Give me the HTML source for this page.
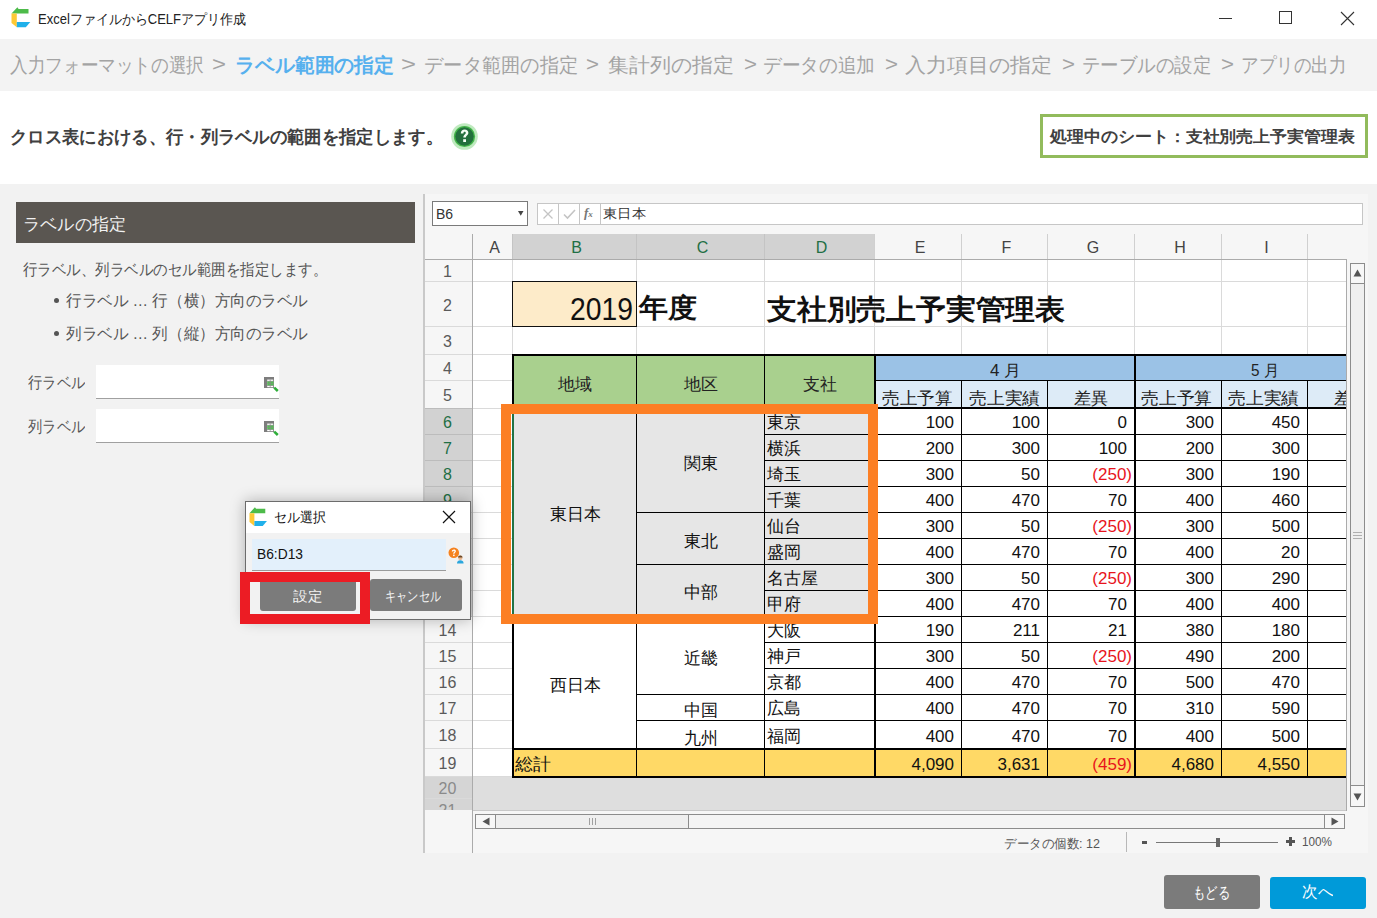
<!DOCTYPE html><html lang="ja"><head><meta charset="utf-8"><style>
html,body{margin:0;padding:0;}
body{width:1377px;height:918px;overflow:hidden;position:relative;background:#f2f2f2;font-family:"Liberation Sans",sans-serif;}
.a{position:absolute;}
.t{position:absolute;white-space:nowrap;}
.t span{display:inline-block;transform-origin:0 0;}
svg{position:absolute;}
</style></head><body>
<div class="a" style="left:0px;top:0px;width:1377px;height:39px;background:#ffffff;"></div>
<div class="a" style="left:0px;top:39px;width:1377px;height:52px;background:#f3f3f3;"></div>
<div class="a" style="left:0px;top:91px;width:1377px;height:93px;background:#ffffff;"></div>
<svg style="left:11px;top:7px" width="22" height="22" viewBox="0 0 22 22"><polygon points="0.50,6.60 6.40,0.20 7.60,1.90 17.50,1.90 17.50,6.60" fill="#4dbb4a"/><polygon points="0.50,6.60 5.80,6.60 5.80,20.30 0.50,16.00" fill="#fdc935"/><polygon points="5.80,15.00 19.30,15.00 14.80,20.30 5.80,20.30" fill="#20b0ea"/></svg>
<div class="t f" style="top:12px;font-size:14px;line-height:14px;color:#222;width:208px;left:38px;"><span style="transform:scaleX(0.9284)">ExcelファイルからCELFアプリ作成</span></div>
<div class="a" style="left:1219px;top:18px;width:13px;height:1px;background:#333;"></div>
<div class="a" style="left:1279px;top:11px;width:13px;height:13px;border:1px solid #333;box-sizing:border-box;"></div>
<svg style="left:1340px;top:11px" width="15" height="15" viewBox="0 0 15 15"><path d="M1 1L14 14M14 1L1 14" stroke="#333" stroke-width="1.1"/></svg>
<div class="t f" style="top:55px;font-size:20px;line-height:20px;color:#a3a3a3;width:194px;left:10px;"><span style="transform:scaleX(0.8818)">入力フォーマットの選択</span></div>
<div class="t f" style="top:54px;font-size:20px;line-height:20px;color:#a3a3a3;width:14px;left:212px;"><span style="transform:scaleX(1.1979)">&gt;</span></div>
<div class="t f" style="top:55px;font-size:20px;line-height:20px;color:#56b0ee;font-weight:bold;width:159px;left:235px;"><span style="transform:scaleX(0.9938)">ラベル範囲の指定</span></div>
<div class="t f" style="top:54px;font-size:20px;line-height:20px;color:#a3a3a3;width:15px;left:401px;"><span style="transform:scaleX(1.2834)">&gt;</span></div>
<div class="t f" style="top:55px;font-size:20px;line-height:20px;color:#a3a3a3;width:154px;left:424px;"><span style="transform:scaleX(0.9625)">データ範囲の指定</span></div>
<div class="t f" style="top:54px;font-size:20px;line-height:20px;color:#a3a3a3;width:13px;left:586px;"><span style="transform:scaleX(1.1123)">&gt;</span></div>
<div class="t f" style="top:55px;font-size:20px;line-height:20px;color:#a3a3a3;width:126px;left:608px;"><span style="transform:scaleX(1.0500)">集計列の指定</span></div>
<div class="t f" style="top:54px;font-size:20px;line-height:20px;color:#a3a3a3;width:13px;left:744px;"><span style="transform:scaleX(1.1123)">&gt;</span></div>
<div class="t f" style="top:55px;font-size:20px;line-height:20px;color:#a3a3a3;width:112px;left:763px;"><span style="transform:scaleX(0.9333)">データの追加</span></div>
<div class="t f" style="top:54px;font-size:20px;line-height:20px;color:#a3a3a3;width:13px;left:885px;"><span style="transform:scaleX(1.1123)">&gt;</span></div>
<div class="t f" style="top:55px;font-size:20px;line-height:20px;color:#a3a3a3;width:147px;left:905px;"><span style="transform:scaleX(1.0500)">入力項目の指定</span></div>
<div class="t f" style="top:54px;font-size:20px;line-height:20px;color:#a3a3a3;width:13px;left:1062px;"><span style="transform:scaleX(1.1123)">&gt;</span></div>
<div class="t f" style="top:55px;font-size:20px;line-height:20px;color:#a3a3a3;width:129px;left:1082px;"><span style="transform:scaleX(0.9214)">テーブルの設定</span></div>
<div class="t f" style="top:54px;font-size:20px;line-height:20px;color:#a3a3a3;width:13px;left:1221px;"><span style="transform:scaleX(1.1123)">&gt;</span></div>
<div class="t f" style="top:55px;font-size:20px;line-height:20px;color:#a3a3a3;width:105px;left:1241px;"><span style="transform:scaleX(0.8750)">アプリの出力</span></div>
<div class="t f" style="top:128px;font-size:18px;line-height:18px;color:#404040;font-weight:bold;width:433px;left:10px;"><span style="transform:scaleX(0.9622)">クロス表における、行・列ラベルの範囲を指定します。</span></div>
<svg style="left:450px;top:122px" width="29" height="29" viewBox="0 0 29 29"><circle cx="14.5" cy="14.5" r="13.3" fill="#bfeabf"/><circle cx="14.5" cy="14.5" r="10.6" fill="#43b549"/><circle cx="14.5" cy="14.5" r="9.2" fill="#22703c"/><path d="M10.8 11.6 C10.8 8.9 12.5 7.6 14.6 7.6 C16.9 7.6 18.4 9 18.4 11 C18.4 13.2 16 13.6 15.8 15.6 L13.3 15.6 C13.3 12.8 15.8 12.3 15.8 11 C15.8 10.2 15.3 9.8 14.6 9.8 C13.8 9.8 13.4 10.4 13.4 11.6 Z" fill="#f4fff4"/><rect x="13.2" y="17.2" width="2.8" height="2.8" fill="#f4fff4"/></svg>
<div class="a" style="left:1040px;top:114px;width:328px;height:44px;background:#ffffff;border:3.5px solid #92bb5c;box-sizing:border-box;"></div>
<div class="t f" style="top:129px;font-size:16px;line-height:16px;color:#404040;font-weight:bold;width:305px;left:1050px;"><span style="transform:scaleX(1.0590)">処理中のシート：支社別売上予実管理表</span></div>
<div class="a" style="left:16px;top:202px;width:399px;height:41px;background:#5a5651;"></div>
<div class="t f" style="top:216px;font-size:17px;line-height:17px;color:#f2f2f2;width:103px;left:23px;"><span style="transform:scaleX(1.0098)">ラベルの指定</span></div>
<div class="t f" style="top:262px;font-size:16px;line-height:16px;color:#555;width:304px;left:23px;"><span style="transform:scaleX(0.9048)">行ラベル、列ラベルのセル範囲を指定します。</span></div>
<div class="a" style="left:54px;top:298px;width:5px;height:5px;border-radius:50%;background:#555"></div>
<div class="t f" style="top:293px;font-size:16px;line-height:16px;color:#555;width:242px;left:66px;"><span style="transform:scaleX(0.9723)">行ラベル … 行（横）方向のラベル</span></div>
<div class="a" style="left:54px;top:331px;width:5px;height:5px;border-radius:50%;background:#555"></div>
<div class="t f" style="top:326px;font-size:16px;line-height:16px;color:#555;width:242px;left:66px;"><span style="transform:scaleX(0.9723)">列ラベル … 列（縦）方向のラベル</span></div>
<div class="t f" style="top:375px;font-size:16px;line-height:16px;color:#555;width:57px;left:28px;"><span style="transform:scaleX(0.8906)">行ラベル</span></div>
<div class="t f" style="top:419px;font-size:16px;line-height:16px;color:#555;width:57px;left:28px;"><span style="transform:scaleX(0.8906)">列ラベル</span></div>
<div class="a" style="left:96px;top:365px;width:183px;height:34px;background:#ffffff;border-bottom:1.5px solid #a0a0a0;box-sizing:border-box;"></div>
<svg style="left:264px;top:377px" width="15" height="15" viewBox="0 0 15 15"><rect x="0" y="0" width="10" height="11" fill="#7d7d7d"/><rect x="3.2" y="2.6" width="6" height="7.6" fill="#ffffff"/><rect x="3.2" y="4.2" width="6.4" height="4.4" fill="#4fc24f"/><path d="M6.2 2.6V10.2M3.2 4.3H9.6M3.2 6.4H9.6M3.2 8.5H9.6" stroke="#8a8a8a" stroke-width="0.7"/><path d="M10.2 10.6L13.8 14" stroke="#2fae3a" stroke-width="2.6"/></svg>
<div class="a" style="left:96px;top:409px;width:183px;height:34px;background:#ffffff;border-bottom:1.5px solid #a0a0a0;box-sizing:border-box;"></div>
<svg style="left:264px;top:421px" width="15" height="15" viewBox="0 0 15 15"><rect x="0" y="0" width="10" height="11" fill="#7d7d7d"/><rect x="3.2" y="2.6" width="6" height="7.6" fill="#ffffff"/><rect x="3.2" y="4.2" width="6.4" height="4.4" fill="#4fc24f"/><path d="M6.2 2.6V10.2M3.2 4.3H9.6M3.2 6.4H9.6M3.2 8.5H9.6" stroke="#8a8a8a" stroke-width="0.7"/><path d="M10.2 10.6L13.8 14" stroke="#2fae3a" stroke-width="2.6"/></svg>
<div class="a" style="left:423px;top:194px;width:945px;height:659px;background:#f6f6f6;"></div>
<div class="a" style="left:423px;top:194px;width:2px;height:659px;background:#c9c9c9;"></div>
<div class="a" style="left:432px;top:201px;width:96px;height:25px;background:#ffffff;border:1px solid #7a7a7a;box-sizing:border-box;"></div>
<div class="t" style="top:207px;font-size:14px;line-height:14px;color:#333;left:436px;"><span>B6</span></div>
<svg style="left:518px;top:211px" width="6" height="5" viewBox="0 0 6 5"><path d="M0 0H5.5L2.75 4.8Z" fill="#444"/></svg>
<div class="a" style="left:537px;top:203px;width:826px;height:22px;background:#ffffff;border:1px solid #c6c6c6;box-sizing:border-box;"></div>
<div class="a" style="left:558px;top:204px;width:1px;height:20px;background:#c6c6c6;"></div>
<div class="a" style="left:579px;top:204px;width:1px;height:20px;background:#c6c6c6;"></div>
<div class="a" style="left:600px;top:204px;width:1px;height:20px;background:#c6c6c6;"></div>
<svg style="left:542px;top:208px" width="12" height="12" viewBox="0 0 12 12"><path d="M1.5 1.5L10.5 10.5M10.5 1.5L1.5 10.5" stroke="#c4c4c4" stroke-width="1.3"/></svg>
<svg style="left:563px;top:208px" width="13" height="12" viewBox="0 0 13 12"><path d="M1 6.5L4.5 10L12 2" stroke="#c4c4c4" stroke-width="1.6" fill="none"/></svg>
<div class="t" style="left:584px;top:206px;font-size:13px;line-height:13px;font-style:italic;font-family:'Liberation Serif',serif;font-weight:bold;color:#777"><span>f<span style="font-size:9px">x</span></span></div>
<div class="t f" style="top:207px;font-size:13px;line-height:13px;color:#333;width:43px;left:603px;"><span style="transform:scaleX(1.1026)">東日本</span></div>
<div class="a" style="left:425px;top:234px;width:943px;height:25px;background:#f6f6f6;"></div>
<div class="a" style="left:512px;top:234px;width:362px;height:25px;background:#d2d2d2;"></div>
<div class="a" style="left:472px;top:234px;width:1px;height:25px;background:#d0d0d0;"></div>
<div class="a" style="left:512px;top:234px;width:1px;height:25px;background:#c4c4c4;"></div>
<div class="a" style="left:636px;top:234px;width:1px;height:25px;background:#c4c4c4;"></div>
<div class="a" style="left:764px;top:234px;width:1px;height:25px;background:#c4c4c4;"></div>
<div class="a" style="left:874px;top:234px;width:1px;height:25px;background:#d0d0d0;"></div>
<div class="a" style="left:961px;top:234px;width:1px;height:25px;background:#d0d0d0;"></div>
<div class="a" style="left:1047px;top:234px;width:1px;height:25px;background:#d0d0d0;"></div>
<div class="a" style="left:1134px;top:234px;width:1px;height:25px;background:#d0d0d0;"></div>
<div class="a" style="left:1221px;top:234px;width:1px;height:25px;background:#d0d0d0;"></div>
<div class="a" style="left:1307px;top:234px;width:1px;height:25px;background:#d0d0d0;"></div>
<div class="a" style="left:425px;top:259px;width:943px;height:1px;background:#ababab;"></div>
<div class="t" style="top:240px;font-size:16px;line-height:16px;color:#444;left:-5.5px;width:1000px;text-align:center;"><span>A</span></div>
<div class="t" style="top:240px;font-size:16px;line-height:16px;color:#1f6f45;left:76.5px;width:1000px;text-align:center;"><span>B</span></div>
<div class="t" style="top:240px;font-size:16px;line-height:16px;color:#1f6f45;left:202.5px;width:1000px;text-align:center;"><span>C</span></div>
<div class="t" style="top:240px;font-size:16px;line-height:16px;color:#1f6f45;left:321.5px;width:1000px;text-align:center;"><span>D</span></div>
<div class="t" style="top:240px;font-size:16px;line-height:16px;color:#444;left:420.0px;width:1000px;text-align:center;"><span>E</span></div>
<div class="t" style="top:240px;font-size:16px;line-height:16px;color:#444;left:506.5px;width:1000px;text-align:center;"><span>F</span></div>
<div class="t" style="top:240px;font-size:16px;line-height:16px;color:#444;left:593.0px;width:1000px;text-align:center;"><span>G</span></div>
<div class="t" style="top:240px;font-size:16px;line-height:16px;color:#444;left:680.0px;width:1000px;text-align:center;"><span>H</span></div>
<div class="t" style="top:240px;font-size:16px;line-height:16px;color:#444;left:766.5px;width:1000px;text-align:center;"><span>I</span></div>
<div class="a" style="left:425px;top:260px;width:47px;height:593px;background:#f6f6f6;"></div>
<div class="a" style="left:472px;top:234px;width:1px;height:619px;background:#ababab;"></div>
<div class="a" style="left:473px;top:260px;width:873px;height:550px;background:#ffffff;"></div>
<div class="a" style="left:473px;top:777px;width:873px;height:33px;background:#dedede;"></div>
<div class="a" style="left:425px;top:408px;width:47px;height:208px;background:#d2d2d2;"></div>
<div class="a" style="left:425px;top:776px;width:47px;height:34px;background:#d5d5d5;"></div>
<div class="a" style="left:512px;top:260px;width:1px;height:516px;background:#dadada;"></div>
<div class="a" style="left:636px;top:260px;width:1px;height:516px;background:#dadada;"></div>
<div class="a" style="left:764px;top:260px;width:1px;height:516px;background:#dadada;"></div>
<div class="a" style="left:874px;top:260px;width:1px;height:516px;background:#dadada;"></div>
<div class="a" style="left:961px;top:260px;width:1px;height:516px;background:#dadada;"></div>
<div class="a" style="left:1047px;top:260px;width:1px;height:516px;background:#dadada;"></div>
<div class="a" style="left:1134px;top:260px;width:1px;height:516px;background:#dadada;"></div>
<div class="a" style="left:1221px;top:260px;width:1px;height:516px;background:#dadada;"></div>
<div class="a" style="left:1307px;top:260px;width:1px;height:516px;background:#dadada;"></div>
<div class="a" style="left:1346px;top:260px;width:1px;height:516px;background:#dadada;"></div>
<div class="a" style="left:473px;top:281px;width:873px;height:1px;background:#dadada;"></div>
<div class="a" style="left:425px;top:281px;width:47px;height:1px;background:#dadada;"></div>
<div class="a" style="left:473px;top:326px;width:873px;height:1px;background:#dadada;"></div>
<div class="a" style="left:425px;top:326px;width:47px;height:1px;background:#dadada;"></div>
<div class="a" style="left:473px;top:354px;width:873px;height:1px;background:#dadada;"></div>
<div class="a" style="left:425px;top:354px;width:47px;height:1px;background:#dadada;"></div>
<div class="a" style="left:473px;top:380px;width:873px;height:1px;background:#dadada;"></div>
<div class="a" style="left:425px;top:380px;width:47px;height:1px;background:#dadada;"></div>
<div class="a" style="left:473px;top:408px;width:873px;height:1px;background:#dadada;"></div>
<div class="a" style="left:425px;top:408px;width:47px;height:1px;background:#bcbcbc;"></div>
<div class="a" style="left:473px;top:434px;width:873px;height:1px;background:#dadada;"></div>
<div class="a" style="left:425px;top:434px;width:47px;height:1px;background:#bcbcbc;"></div>
<div class="a" style="left:473px;top:460px;width:873px;height:1px;background:#dadada;"></div>
<div class="a" style="left:425px;top:460px;width:47px;height:1px;background:#bcbcbc;"></div>
<div class="a" style="left:473px;top:486px;width:873px;height:1px;background:#dadada;"></div>
<div class="a" style="left:425px;top:486px;width:47px;height:1px;background:#bcbcbc;"></div>
<div class="a" style="left:473px;top:512px;width:873px;height:1px;background:#dadada;"></div>
<div class="a" style="left:425px;top:512px;width:47px;height:1px;background:#bcbcbc;"></div>
<div class="a" style="left:473px;top:538px;width:873px;height:1px;background:#dadada;"></div>
<div class="a" style="left:425px;top:538px;width:47px;height:1px;background:#bcbcbc;"></div>
<div class="a" style="left:473px;top:564px;width:873px;height:1px;background:#dadada;"></div>
<div class="a" style="left:425px;top:564px;width:47px;height:1px;background:#bcbcbc;"></div>
<div class="a" style="left:473px;top:590px;width:873px;height:1px;background:#dadada;"></div>
<div class="a" style="left:425px;top:590px;width:47px;height:1px;background:#bcbcbc;"></div>
<div class="a" style="left:473px;top:616px;width:873px;height:1px;background:#dadada;"></div>
<div class="a" style="left:425px;top:616px;width:47px;height:1px;background:#bcbcbc;"></div>
<div class="a" style="left:473px;top:642px;width:873px;height:1px;background:#dadada;"></div>
<div class="a" style="left:425px;top:642px;width:47px;height:1px;background:#dadada;"></div>
<div class="a" style="left:473px;top:668px;width:873px;height:1px;background:#dadada;"></div>
<div class="a" style="left:425px;top:668px;width:47px;height:1px;background:#dadada;"></div>
<div class="a" style="left:473px;top:694px;width:873px;height:1px;background:#dadada;"></div>
<div class="a" style="left:425px;top:694px;width:47px;height:1px;background:#dadada;"></div>
<div class="a" style="left:473px;top:720px;width:873px;height:1px;background:#dadada;"></div>
<div class="a" style="left:425px;top:720px;width:47px;height:1px;background:#dadada;"></div>
<div class="a" style="left:473px;top:748px;width:873px;height:1px;background:#dadada;"></div>
<div class="a" style="left:425px;top:748px;width:47px;height:1px;background:#dadada;"></div>
<div class="a" style="left:473px;top:776px;width:873px;height:1px;background:#dadada;"></div>
<div class="a" style="left:425px;top:776px;width:47px;height:1px;background:#dadada;"></div>
<div class="a" style="left:473px;top:798px;width:873px;height:1px;background:#dadada;"></div>
<div class="a" style="left:425px;top:798px;width:47px;height:1px;background:#dadada;"></div>
<div class="t" style="top:264.0px;font-size:16px;line-height:16px;color:#5a5a5a;left:-52.5px;width:1000px;text-align:center;"><span>1</span></div>
<div class="t" style="top:297.5px;font-size:16px;line-height:16px;color:#5a5a5a;left:-52.5px;width:1000px;text-align:center;"><span>2</span></div>
<div class="t" style="top:334.0px;font-size:16px;line-height:16px;color:#5a5a5a;left:-52.5px;width:1000px;text-align:center;"><span>3</span></div>
<div class="t" style="top:361.0px;font-size:16px;line-height:16px;color:#5a5a5a;left:-52.5px;width:1000px;text-align:center;"><span>4</span></div>
<div class="t" style="top:388.0px;font-size:16px;line-height:16px;color:#5a5a5a;left:-52.5px;width:1000px;text-align:center;"><span>5</span></div>
<div class="t" style="top:415.0px;font-size:16px;line-height:16px;color:#1f6f45;left:-52.5px;width:1000px;text-align:center;"><span>6</span></div>
<div class="t" style="top:441.0px;font-size:16px;line-height:16px;color:#1f6f45;left:-52.5px;width:1000px;text-align:center;"><span>7</span></div>
<div class="t" style="top:467.0px;font-size:16px;line-height:16px;color:#1f6f45;left:-52.5px;width:1000px;text-align:center;"><span>8</span></div>
<div class="t" style="top:493.0px;font-size:16px;line-height:16px;color:#1f6f45;left:-52.5px;width:1000px;text-align:center;"><span>9</span></div>
<div class="t" style="top:519.0px;font-size:16px;line-height:16px;color:#1f6f45;left:-52.5px;width:1000px;text-align:center;"><span>10</span></div>
<div class="t" style="top:545.0px;font-size:16px;line-height:16px;color:#1f6f45;left:-52.5px;width:1000px;text-align:center;"><span>11</span></div>
<div class="t" style="top:571.0px;font-size:16px;line-height:16px;color:#1f6f45;left:-52.5px;width:1000px;text-align:center;"><span>12</span></div>
<div class="t" style="top:597.0px;font-size:16px;line-height:16px;color:#1f6f45;left:-52.5px;width:1000px;text-align:center;"><span>13</span></div>
<div class="t" style="top:623.0px;font-size:16px;line-height:16px;color:#5a5a5a;left:-52.5px;width:1000px;text-align:center;"><span>14</span></div>
<div class="t" style="top:649.0px;font-size:16px;line-height:16px;color:#5a5a5a;left:-52.5px;width:1000px;text-align:center;"><span>15</span></div>
<div class="t" style="top:675.0px;font-size:16px;line-height:16px;color:#5a5a5a;left:-52.5px;width:1000px;text-align:center;"><span>16</span></div>
<div class="t" style="top:701.0px;font-size:16px;line-height:16px;color:#5a5a5a;left:-52.5px;width:1000px;text-align:center;"><span>17</span></div>
<div class="t" style="top:728.0px;font-size:16px;line-height:16px;color:#5a5a5a;left:-52.5px;width:1000px;text-align:center;"><span>18</span></div>
<div class="t" style="top:756.0px;font-size:16px;line-height:16px;color:#5a5a5a;left:-52.5px;width:1000px;text-align:center;"><span>19</span></div>
<div class="t" style="top:781.0px;font-size:16px;line-height:16px;color:#8a8a8a;left:-52.5px;width:1000px;text-align:center;"><span>20</span></div>
<div class="t" style="top:803.0px;font-size:16px;line-height:16px;color:#8a8a8a;left:-52.5px;width:1000px;text-align:center;"><span>21</span></div>
<div class="a" style="left:425px;top:810px;width:47px;height:43px;background:#f6f6f6;"></div>
<div class="a" style="left:472px;top:810px;width:1px;height:43px;background:#ababab;"></div>
<div class="a" style="left:473px;top:777px;width:873px;height:33px;background:#dedede;"></div>
<div class="a" style="left:512px;top:281px;width:125px;height:46px;background:#fdebc9;border:1px solid #111;box-sizing:border-box;"></div>
<div class="t f" style="top:293px;font-size:32px;line-height:32px;color:#111;width:63px;left:570px;"><span style="transform:scaleX(0.8850)">2019</span></div>
<div class="t f" style="top:295px;font-size:27px;line-height:27px;color:#111;font-weight:bold;width:58px;left:639px;"><span style="transform:scaleX(1.0741)">年度</span></div>
<div class="t f" style="top:296px;font-size:28px;line-height:28px;color:#111;font-weight:bold;width:298px;left:767px;"><span style="transform:scaleX(1.0643)">支社別売上予実管理表</span></div>
<div class="a" style="left:512px;top:354px;width:362px;height:54px;background:#a9d08e;"></div>
<div class="a" style="left:874px;top:354px;width:472px;height:27px;background:#9bc2e6;"></div>
<div class="a" style="left:874px;top:381px;width:472px;height:27px;background:#ddebf7;"></div>
<div class="a" style="left:512px;top:748px;width:834px;height:29px;background:#ffd966;"></div>
<div class="a" style="left:512px;top:408px;width:362px;height:208px;background:#e6e6e6;"></div>
<div class="a" style="left:512px;top:616px;width:252px;height:132px;background:#ffffff;"></div>
<div class="a" style="left:636px;top:354px;width:1px;height:54px;background:#000;"></div>
<div class="a" style="left:764px;top:354px;width:1px;height:54px;background:#000;"></div>
<div class="a" style="left:961px;top:380px;width:1px;height:398px;background:#000;"></div>
<div class="a" style="left:1047px;top:380px;width:1px;height:398px;background:#000;"></div>
<div class="a" style="left:1221px;top:380px;width:1px;height:398px;background:#000;"></div>
<div class="a" style="left:1307px;top:380px;width:1px;height:398px;background:#000;"></div>
<div class="a" style="left:874px;top:380px;width:472px;height:1px;background:#000;"></div>
<div class="a" style="left:764px;top:434px;width:582px;height:1px;background:#000;"></div>
<div class="a" style="left:764px;top:460px;width:582px;height:1px;background:#000;"></div>
<div class="a" style="left:764px;top:486px;width:582px;height:1px;background:#000;"></div>
<div class="a" style="left:764px;top:512px;width:582px;height:1px;background:#000;"></div>
<div class="a" style="left:764px;top:538px;width:582px;height:1px;background:#000;"></div>
<div class="a" style="left:764px;top:564px;width:582px;height:1px;background:#000;"></div>
<div class="a" style="left:764px;top:590px;width:582px;height:1px;background:#000;"></div>
<div class="a" style="left:764px;top:616px;width:582px;height:1px;background:#000;"></div>
<div class="a" style="left:764px;top:642px;width:582px;height:1px;background:#000;"></div>
<div class="a" style="left:764px;top:668px;width:582px;height:1px;background:#000;"></div>
<div class="a" style="left:764px;top:694px;width:582px;height:1px;background:#000;"></div>
<div class="a" style="left:764px;top:720px;width:582px;height:1px;background:#000;"></div>
<div class="a" style="left:764px;top:748px;width:582px;height:1px;background:#000;"></div>
<div class="a" style="left:636px;top:512px;width:128px;height:1px;background:#000;"></div>
<div class="a" style="left:636px;top:564px;width:128px;height:1px;background:#000;"></div>
<div class="a" style="left:636px;top:694px;width:128px;height:1px;background:#000;"></div>
<div class="a" style="left:636px;top:720px;width:128px;height:1px;background:#000;"></div>
<div class="a" style="left:636px;top:408px;width:1px;height:370px;background:#000;"></div>
<div class="a" style="left:764px;top:408px;width:1px;height:370px;background:#000;"></div>
<div class="a" style="left:512px;top:616px;width:362px;height:1px;background:#000;"></div>
<div class="a" style="left:512px;top:354px;width:834px;height:2px;background:#000;"></div>
<div class="a" style="left:512px;top:407px;width:834px;height:2px;background:#000;"></div>
<div class="a" style="left:512px;top:748px;width:834px;height:2px;background:#000;"></div>
<div class="a" style="left:512px;top:776px;width:834px;height:2px;background:#000;"></div>
<div class="a" style="left:512px;top:354px;width:2px;height:424px;background:#000;"></div>
<div class="a" style="left:874px;top:354px;width:2px;height:424px;background:#000;"></div>
<div class="a" style="left:1134px;top:354px;width:2px;height:424px;background:#000;"></div>
<div class="a" style="left:512px;top:408px;width:2px;height:208px;background:#217346;"></div>
<div class="t" style="top:376px;font-size:17px;line-height:17px;color:#222;left:75px;width:1000px;text-align:center;"><span>地域</span></div>
<div class="t" style="top:376px;font-size:17px;line-height:17px;color:#222;left:201px;width:1000px;text-align:center;"><span>地区</span></div>
<div class="t" style="top:376px;font-size:17px;line-height:17px;color:#222;left:320px;width:1000px;text-align:center;"><span>支社</span></div>
<div class="t f" style="top:363px;font-size:16px;line-height:16px;color:#222;width:31px;left:990px;"><span style="transform:scaleX(1.0564)">4&nbsp;月</span></div>
<div class="t f" style="top:363px;font-size:16px;line-height:16px;color:#222;width:28px;left:1251px;"><span style="transform:scaleX(0.9542)">5&nbsp;月</span></div>
<div class="t f" style="top:390px;font-size:17px;line-height:17px;color:#222;width:70px;left:882px;"><span style="transform:scaleX(1.0294)">売上予算</span></div>
<div class="t f" style="top:390px;font-size:17px;line-height:17px;color:#222;width:71px;left:969px;"><span style="transform:scaleX(1.0441)">売上実績</span></div>
<div class="t f" style="top:390px;font-size:17px;line-height:17px;color:#222;width:34px;left:1074px;"><span style="transform:scaleX(1.0000)">差異</span></div>
<div class="t f" style="top:390px;font-size:17px;line-height:17px;color:#222;width:71px;left:1141px;"><span style="transform:scaleX(1.0441)">売上予算</span></div>
<div class="t f" style="top:390px;font-size:17px;line-height:17px;color:#222;width:71px;left:1228px;"><span style="transform:scaleX(1.0441)">売上実績</span></div>
<div class="t f" style="top:390px;font-size:17px;line-height:17px;color:#222;width:34px;left:1334px;"><span style="transform:scaleX(1.0000)">差異</span></div>
<div class="t" style="top:414px;font-size:17px;line-height:17px;color:#111;right:423px;text-align:right;"><span>100</span></div>
<div class="t" style="top:414px;font-size:17px;line-height:17px;color:#111;right:337px;text-align:right;"><span>100</span></div>
<div class="t" style="top:414px;font-size:17px;line-height:17px;color:#111;right:250px;text-align:right;"><span>0</span></div>
<div class="t" style="top:414px;font-size:17px;line-height:17px;color:#111;right:163px;text-align:right;"><span>300</span></div>
<div class="t" style="top:414px;font-size:17px;line-height:17px;color:#111;right:77px;text-align:right;"><span>450</span></div>
<div class="t" style="top:440px;font-size:17px;line-height:17px;color:#111;right:423px;text-align:right;"><span>200</span></div>
<div class="t" style="top:440px;font-size:17px;line-height:17px;color:#111;right:337px;text-align:right;"><span>300</span></div>
<div class="t" style="top:440px;font-size:17px;line-height:17px;color:#111;right:250px;text-align:right;"><span>100</span></div>
<div class="t" style="top:440px;font-size:17px;line-height:17px;color:#111;right:163px;text-align:right;"><span>200</span></div>
<div class="t" style="top:440px;font-size:17px;line-height:17px;color:#111;right:77px;text-align:right;"><span>300</span></div>
<div class="t" style="top:466px;font-size:17px;line-height:17px;color:#111;right:423px;text-align:right;"><span>300</span></div>
<div class="t" style="top:466px;font-size:17px;line-height:17px;color:#111;right:337px;text-align:right;"><span>50</span></div>
<div class="t" style="top:466px;font-size:17px;line-height:17px;color:#e8141c;right:245px;text-align:right;"><span>(250)</span></div>
<div class="t" style="top:466px;font-size:17px;line-height:17px;color:#111;right:163px;text-align:right;"><span>300</span></div>
<div class="t" style="top:466px;font-size:17px;line-height:17px;color:#111;right:77px;text-align:right;"><span>190</span></div>
<div class="t" style="top:492px;font-size:17px;line-height:17px;color:#111;right:423px;text-align:right;"><span>400</span></div>
<div class="t" style="top:492px;font-size:17px;line-height:17px;color:#111;right:337px;text-align:right;"><span>470</span></div>
<div class="t" style="top:492px;font-size:17px;line-height:17px;color:#111;right:250px;text-align:right;"><span>70</span></div>
<div class="t" style="top:492px;font-size:17px;line-height:17px;color:#111;right:163px;text-align:right;"><span>400</span></div>
<div class="t" style="top:492px;font-size:17px;line-height:17px;color:#111;right:77px;text-align:right;"><span>460</span></div>
<div class="t" style="top:518px;font-size:17px;line-height:17px;color:#111;right:423px;text-align:right;"><span>300</span></div>
<div class="t" style="top:518px;font-size:17px;line-height:17px;color:#111;right:337px;text-align:right;"><span>50</span></div>
<div class="t" style="top:518px;font-size:17px;line-height:17px;color:#e8141c;right:245px;text-align:right;"><span>(250)</span></div>
<div class="t" style="top:518px;font-size:17px;line-height:17px;color:#111;right:163px;text-align:right;"><span>300</span></div>
<div class="t" style="top:518px;font-size:17px;line-height:17px;color:#111;right:77px;text-align:right;"><span>500</span></div>
<div class="t" style="top:544px;font-size:17px;line-height:17px;color:#111;right:423px;text-align:right;"><span>400</span></div>
<div class="t" style="top:544px;font-size:17px;line-height:17px;color:#111;right:337px;text-align:right;"><span>470</span></div>
<div class="t" style="top:544px;font-size:17px;line-height:17px;color:#111;right:250px;text-align:right;"><span>70</span></div>
<div class="t" style="top:544px;font-size:17px;line-height:17px;color:#111;right:163px;text-align:right;"><span>400</span></div>
<div class="t" style="top:544px;font-size:17px;line-height:17px;color:#111;right:77px;text-align:right;"><span>20</span></div>
<div class="t" style="top:570px;font-size:17px;line-height:17px;color:#111;right:423px;text-align:right;"><span>300</span></div>
<div class="t" style="top:570px;font-size:17px;line-height:17px;color:#111;right:337px;text-align:right;"><span>50</span></div>
<div class="t" style="top:570px;font-size:17px;line-height:17px;color:#e8141c;right:245px;text-align:right;"><span>(250)</span></div>
<div class="t" style="top:570px;font-size:17px;line-height:17px;color:#111;right:163px;text-align:right;"><span>300</span></div>
<div class="t" style="top:570px;font-size:17px;line-height:17px;color:#111;right:77px;text-align:right;"><span>290</span></div>
<div class="t" style="top:596px;font-size:17px;line-height:17px;color:#111;right:423px;text-align:right;"><span>400</span></div>
<div class="t" style="top:596px;font-size:17px;line-height:17px;color:#111;right:337px;text-align:right;"><span>470</span></div>
<div class="t" style="top:596px;font-size:17px;line-height:17px;color:#111;right:250px;text-align:right;"><span>70</span></div>
<div class="t" style="top:596px;font-size:17px;line-height:17px;color:#111;right:163px;text-align:right;"><span>400</span></div>
<div class="t" style="top:596px;font-size:17px;line-height:17px;color:#111;right:77px;text-align:right;"><span>400</span></div>
<div class="t" style="top:622px;font-size:17px;line-height:17px;color:#111;right:423px;text-align:right;"><span>190</span></div>
<div class="t" style="top:622px;font-size:17px;line-height:17px;color:#111;right:337px;text-align:right;"><span>211</span></div>
<div class="t" style="top:622px;font-size:17px;line-height:17px;color:#111;right:250px;text-align:right;"><span>21</span></div>
<div class="t" style="top:622px;font-size:17px;line-height:17px;color:#111;right:163px;text-align:right;"><span>380</span></div>
<div class="t" style="top:622px;font-size:17px;line-height:17px;color:#111;right:77px;text-align:right;"><span>180</span></div>
<div class="t" style="top:648px;font-size:17px;line-height:17px;color:#111;right:423px;text-align:right;"><span>300</span></div>
<div class="t" style="top:648px;font-size:17px;line-height:17px;color:#111;right:337px;text-align:right;"><span>50</span></div>
<div class="t" style="top:648px;font-size:17px;line-height:17px;color:#e8141c;right:245px;text-align:right;"><span>(250)</span></div>
<div class="t" style="top:648px;font-size:17px;line-height:17px;color:#111;right:163px;text-align:right;"><span>490</span></div>
<div class="t" style="top:648px;font-size:17px;line-height:17px;color:#111;right:77px;text-align:right;"><span>200</span></div>
<div class="t" style="top:674px;font-size:17px;line-height:17px;color:#111;right:423px;text-align:right;"><span>400</span></div>
<div class="t" style="top:674px;font-size:17px;line-height:17px;color:#111;right:337px;text-align:right;"><span>470</span></div>
<div class="t" style="top:674px;font-size:17px;line-height:17px;color:#111;right:250px;text-align:right;"><span>70</span></div>
<div class="t" style="top:674px;font-size:17px;line-height:17px;color:#111;right:163px;text-align:right;"><span>500</span></div>
<div class="t" style="top:674px;font-size:17px;line-height:17px;color:#111;right:77px;text-align:right;"><span>470</span></div>
<div class="t" style="top:700px;font-size:17px;line-height:17px;color:#111;right:423px;text-align:right;"><span>400</span></div>
<div class="t" style="top:700px;font-size:17px;line-height:17px;color:#111;right:337px;text-align:right;"><span>470</span></div>
<div class="t" style="top:700px;font-size:17px;line-height:17px;color:#111;right:250px;text-align:right;"><span>70</span></div>
<div class="t" style="top:700px;font-size:17px;line-height:17px;color:#111;right:163px;text-align:right;"><span>310</span></div>
<div class="t" style="top:700px;font-size:17px;line-height:17px;color:#111;right:77px;text-align:right;"><span>590</span></div>
<div class="t" style="top:728px;font-size:17px;line-height:17px;color:#111;right:423px;text-align:right;"><span>400</span></div>
<div class="t" style="top:728px;font-size:17px;line-height:17px;color:#111;right:337px;text-align:right;"><span>470</span></div>
<div class="t" style="top:728px;font-size:17px;line-height:17px;color:#111;right:250px;text-align:right;"><span>70</span></div>
<div class="t" style="top:728px;font-size:17px;line-height:17px;color:#111;right:163px;text-align:right;"><span>400</span></div>
<div class="t" style="top:728px;font-size:17px;line-height:17px;color:#111;right:77px;text-align:right;"><span>500</span></div>
<div class="t" style="top:756px;font-size:17px;line-height:17px;color:#111;right:423px;text-align:right;"><span>4,090</span></div>
<div class="t" style="top:756px;font-size:17px;line-height:17px;color:#111;right:337px;text-align:right;"><span>3,631</span></div>
<div class="t" style="top:756px;font-size:17px;line-height:17px;color:#e8141c;right:245px;text-align:right;"><span>(459)</span></div>
<div class="t" style="top:756px;font-size:17px;line-height:17px;color:#111;right:163px;text-align:right;"><span>4,680</span></div>
<div class="t" style="top:756px;font-size:17px;line-height:17px;color:#111;right:77px;text-align:right;"><span>4,550</span></div>
<div class="t" style="top:414px;font-size:17px;line-height:17px;color:#111;left:767px;"><span>東京</span></div>
<div class="t" style="top:440px;font-size:17px;line-height:17px;color:#111;left:767px;"><span>横浜</span></div>
<div class="t" style="top:466px;font-size:17px;line-height:17px;color:#111;left:767px;"><span>埼玉</span></div>
<div class="t" style="top:492px;font-size:17px;line-height:17px;color:#111;left:767px;"><span>千葉</span></div>
<div class="t" style="top:518px;font-size:17px;line-height:17px;color:#111;left:767px;"><span>仙台</span></div>
<div class="t" style="top:544px;font-size:17px;line-height:17px;color:#111;left:767px;"><span>盛岡</span></div>
<div class="t" style="top:570px;font-size:17px;line-height:17px;color:#111;left:767px;"><span>名古屋</span></div>
<div class="t" style="top:596px;font-size:17px;line-height:17px;color:#111;left:767px;"><span>甲府</span></div>
<div class="t" style="top:622px;font-size:17px;line-height:17px;color:#111;left:767px;"><span>大阪</span></div>
<div class="t" style="top:648px;font-size:17px;line-height:17px;color:#111;left:767px;"><span>神戸</span></div>
<div class="t" style="top:674px;font-size:17px;line-height:17px;color:#111;left:767px;"><span>京都</span></div>
<div class="t" style="top:700px;font-size:17px;line-height:17px;color:#111;left:767px;"><span>広島</span></div>
<div class="t" style="top:728px;font-size:17px;line-height:17px;color:#111;left:767px;"><span>福岡</span></div>
<div class="t" style="top:455px;font-size:17px;line-height:17px;color:#111;left:201px;width:1000px;text-align:center;"><span>関東</span></div>
<div class="t" style="top:533px;font-size:17px;line-height:17px;color:#111;left:201px;width:1000px;text-align:center;"><span>東北</span></div>
<div class="t" style="top:584px;font-size:17px;line-height:17px;color:#111;left:201px;width:1000px;text-align:center;"><span>中部</span></div>
<div class="t" style="top:650px;font-size:17px;line-height:17px;color:#111;left:201px;width:1000px;text-align:center;"><span>近畿</span></div>
<div class="t" style="top:702px;font-size:17px;line-height:17px;color:#111;left:201px;width:1000px;text-align:center;"><span>中国</span></div>
<div class="t" style="top:730px;font-size:17px;line-height:17px;color:#111;left:201px;width:1000px;text-align:center;"><span>九州</span></div>
<div class="t" style="top:506px;font-size:17px;line-height:17px;color:#111;left:75px;width:1000px;text-align:center;"><span>東日本</span></div>
<div class="t" style="top:677px;font-size:17px;line-height:17px;color:#111;left:75px;width:1000px;text-align:center;"><span>西日本</span></div>
<div class="t f" style="top:756px;font-size:17px;line-height:17px;color:#111;width:36px;left:515px;"><span style="transform:scaleX(1.0588)">総計</span></div>
<div class="a" style="left:1347px;top:259px;width:21px;height:594px;background:#f6f6f6;"></div>
<div class="a" style="left:1346px;top:259px;width:1px;height:552px;background:#ababab;"></div>
<div class="a" style="left:1350px;top:263px;width:15px;height:544px;background:#efefef;border:1px solid #8c8c8c;box-sizing:border-box;"></div>
<div class="a" style="left:1350px;top:263px;width:15px;height:21px;background:#f7f7f7;border:1px solid #8c8c8c;box-sizing:border-box;"></div>
<div class="a" style="left:1350px;top:785px;width:15px;height:22px;background:#f7f7f7;border:1px solid #8c8c8c;box-sizing:border-box;"></div>
<svg style="left:1353px;top:269px" width="9" height="8" viewBox="0 0 9 8"><path d="M4.5 0.5L8.5 7.5H0.5Z" fill="#555"/></svg>
<svg style="left:1353px;top:793px" width="9" height="8" viewBox="0 0 9 8"><path d="M0.5 0.5H8.5L4.5 7.5Z" fill="#555"/></svg>
<div class="a" style="left:1353px;top:532px;width:9px;height:1px;background:#b0b0b0;"></div>
<div class="a" style="left:1353px;top:535px;width:9px;height:1px;background:#b0b0b0;"></div>
<div class="a" style="left:1353px;top:538px;width:9px;height:1px;background:#b0b0b0;"></div>
<div class="a" style="left:473px;top:810px;width:873px;height:1px;background:#c8c8c8;"></div>
<div class="a" style="left:475px;top:814px;width:870px;height:15px;background:#f4f4f4;border:1px solid #8c8c8c;box-sizing:border-box;"></div>
<div class="a" style="left:475px;top:814px;width:21px;height:15px;background:#f7f7f7;border:1px solid #8c8c8c;box-sizing:border-box;"></div>
<div class="a" style="left:495px;top:814px;width:194px;height:15px;background:#efefef;border:1px solid #8c8c8c;box-sizing:border-box;"></div>
<div class="a" style="left:1324px;top:814px;width:21px;height:15px;background:#f7f7f7;border:1px solid #8c8c8c;box-sizing:border-box;"></div>
<svg style="left:482px;top:817px" width="8" height="9" viewBox="0 0 8 9"><path d="M0.5 4.5L7.5 0.5V8.5Z" fill="#555"/></svg>
<svg style="left:1331px;top:817px" width="8" height="9" viewBox="0 0 8 9"><path d="M7.5 4.5L0.5 0.5V8.5Z" fill="#555"/></svg>
<div class="a" style="left:589px;top:818px;width:1px;height:7px;background:#a0a0a0;"></div>
<div class="a" style="left:592px;top:818px;width:1px;height:7px;background:#a0a0a0;"></div>
<div class="a" style="left:595px;top:818px;width:1px;height:7px;background:#a0a0a0;"></div>
<div class="t f" style="top:837px;font-size:13px;line-height:13px;color:#555;width:96px;left:1004px;"><span style="transform:scaleX(0.9630)">データの個数:&nbsp;12</span></div>
<div class="a" style="left:1126px;top:832px;width:1px;height:20px;background:#b8b8b8;"></div>
<div class="a" style="left:1142px;top:841px;width:5px;height:3px;background:#555;"></div>
<div class="a" style="left:1156px;top:842px;width:122px;height:1px;background:#777;"></div>
<div class="a" style="left:1216px;top:838px;width:4px;height:9px;background:#666;"></div>
<div class="a" style="left:1286px;top:840px;width:9px;height:3px;background:#555;"></div>
<div class="a" style="left:1289px;top:837px;width:3px;height:9px;background:#555;"></div>
<div class="t f" style="top:835px;font-size:13px;line-height:13px;color:#555;width:30px;left:1302px;"><span style="transform:scaleX(0.9023)">100%</span></div>
<div class="a" style="left:501px;top:404px;width:377px;height:220px;border:10px solid #fc7f24;box-sizing:border-box;"></div>
<div class="a" style="left:245px;top:501px;width:226px;height:119px;background:#f2f2f2;border:1px solid #6c6c6c;box-sizing:border-box;box-shadow:0 0 14px rgba(0,0,0,0.28);"></div>
<div class="a" style="left:246px;top:502px;width:224px;height:31px;background:#ffffff;"></div>
<svg style="left:249px;top:507px" width="22" height="22" viewBox="0 0 22 22"><polygon points="0.47,6.14 5.95,0.19 7.07,1.77 16.28,1.77 16.28,6.14" fill="#4dbb4a"/><polygon points="0.47,6.14 5.39,6.14 5.39,18.88 0.47,14.88" fill="#fdc935"/><polygon points="5.39,13.95 17.95,13.95 13.76,18.88 5.39,18.88" fill="#20b0ea"/></svg>
<div class="t f" style="top:510px;font-size:14px;line-height:14px;color:#111;width:52px;left:274px;"><span style="transform:scaleX(0.9286)">セル選択</span></div>
<svg style="left:442px;top:510px" width="14" height="14" viewBox="0 0 14 14"><path d="M1 1L13 13M13 1L1 13" stroke="#111" stroke-width="1.2"/></svg>
<div class="a" style="left:252px;top:539px;width:194px;height:32px;background:#e3f0fb;border-bottom:1px solid #9a9a9a;box-sizing:border-box;"></div>
<div class="t f" style="top:547px;font-size:14px;line-height:14px;color:#111;width:46px;left:257px;"><span style="transform:scaleX(0.9849)">B6:D13</span></div>
<svg style="left:448px;top:547px" width="17" height="17" viewBox="0 0 17 17"><circle cx="5.8" cy="5.8" r="5.3" fill="#f5821f"/><path d="M3.8 4.6C3.8 3.2 4.7 2.5 5.9 2.5C7.1 2.5 7.9 3.2 7.9 4.2C7.9 5.4 6.6 5.6 6.5 6.8H5.2C5.2 5.2 6.5 5 6.5 4.3C6.5 3.9 6.3 3.7 5.9 3.7C5.5 3.7 5.2 4 5.2 4.6Z" fill="#fff"/><rect x="5.1" y="7.6" width="1.5" height="1.5" fill="#fff"/><circle cx="12.3" cy="10.8" r="2.2" fill="#e9b48a"/><path d="M12.3 8.4a2.3 2 0 0 1 2.3 2H10a2.3 2 0 0 1 2.3-2Z" fill="#6b4a2a"/><path d="M9 16.5C9 14.2 10.4 13.3 12.3 13.3C14.2 13.3 15.6 14.2 15.6 16.5Z" fill="#2aa6dd"/></svg>
<div class="a" style="left:260px;top:579px;width:96px;height:32px;background:#7b7b7b;border-radius:3px"></div>
<div class="a" style="left:370px;top:579px;width:92px;height:32px;background:#7b7b7b;border-radius:3px"></div>
<div class="t f" style="top:589px;font-size:14px;line-height:14px;color:#f4f4f4;width:29px;left:293px;"><span style="transform:scaleX(1.0357)">設定</span></div>
<div class="t f" style="top:589px;font-size:14px;line-height:14px;color:#f4f4f4;width:56px;left:385px;"><span style="transform:scaleX(0.8000)">キャンセル</span></div>
<div class="a" style="left:240px;top:572px;width:130px;height:52px;border:10px solid #ec1c24;box-sizing:border-box;"></div>
<div class="a" style="left:1164px;top:875px;width:96px;height:34px;background:#7b7b7b;border-radius:3px"></div>
<div class="a" style="left:1270px;top:877px;width:96px;height:32px;background:#009ad9;border-radius:3px"></div>
<div class="t f" style="top:885px;font-size:16px;line-height:16px;color:#ffffff;width:37px;left:1193px;"><span style="transform:scaleX(0.7708)">もどる</span></div>
<div class="t f" style="top:884px;font-size:16px;line-height:16px;color:#ffffff;width:31px;left:1302px;"><span style="transform:scaleX(0.9688)">次へ</span></div>
<script>
(function(){var els=document.querySelectorAll('.f');for(var i=0;i<els.length;i++){var d=els[i];var s=d.firstChild;var w=parseFloat(d.style.width);s.style.transform='none';var n=s.getBoundingClientRect().width;if(n>0&&w>0){s.style.transform='scaleX('+(w/n)+')';}}})();
</script></body></html>
